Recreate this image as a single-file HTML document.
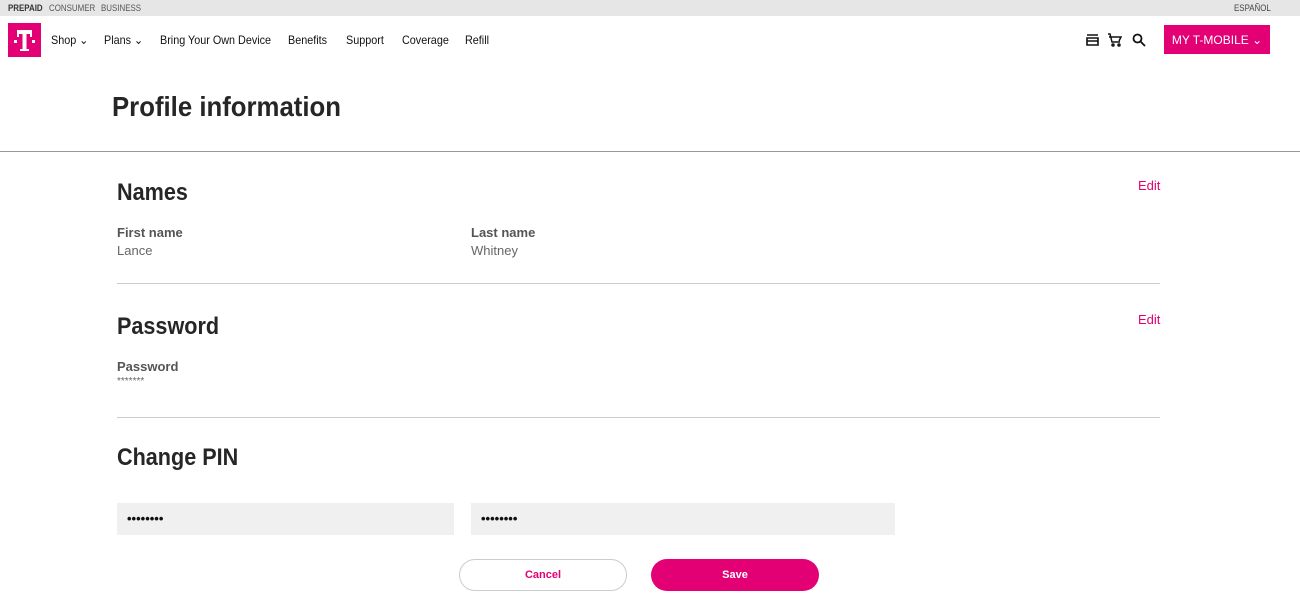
<!DOCTYPE html>
<html><head><style>
*{margin:0;padding:0;box-sizing:border-box}
body{width:1300px;height:601px;font-family:"Liberation Sans",sans-serif;background:#fff;position:relative;overflow:hidden;color:#222}
.a{position:absolute;white-space:nowrap}
.top{position:absolute;left:0;top:0;width:1300px;height:16px;background:#e6e6e6;font-size:9px;color:#333}
.top span{transform:scaleX(0.88);transform-origin:left}
.nav{font-size:12px;color:#111;top:33px;transform:scaleX(0.9);transform-origin:left}
.h{font-size:24px;color:#262626;font-weight:bold;transform:scaleX(0.9);transform-origin:left}
.lb{font-size:13px;font-weight:bold;color:#555}
.v{font-size:13px;color:#666}
.ed{font-size:13px;color:#e20074}
.hr{position:absolute;left:117px;width:1043px;height:1px;background:#ccc}
.in{position:absolute;top:503px;height:32px;background:#f0f0f0;font-size:13px;padding:8px 10px;color:#111;font-weight:bold}
.btn{position:absolute;top:559px;width:168px;height:32px;border-radius:16px;font-size:11px;font-weight:bold;text-align:center;line-height:30px}
</style></head><body>
<div class="top">
<span class="a" style="left:8px;top:3px;font-weight:bold">PREPAID</span>
<span class="a" style="left:49px;top:3px;color:#555">CONSUMER</span>
<span class="a" style="left:101px;top:3px;color:#555">BUSINESS</span>
<span class="a" style="left:1234px;top:3px;color:#444">ESPAÑOL</span>
</div>
<div class="a" style="left:8px;top:23px;width:33px;height:34px;background:#e20074"></div>
<svg class="a" style="left:8px;top:23px" width="33" height="34" viewBox="0 0 33 34"><g fill="#fff"><rect x="9" y="7" width="15" height="4"/><rect x="14.5" y="7" width="4" height="20"/><rect x="12" y="26" width="9" height="2"/><rect x="6" y="17" width="3" height="3"/><rect x="24" y="17" width="3" height="3"/><rect x="9" y="7" width="2" height="7"/><rect x="22" y="7" width="2" height="7"/></g></svg>
<span class="a nav" style="left:51px">Shop ⌄</span>
<span class="a nav" style="left:104px">Plans ⌄</span>
<span class="a nav" style="left:160px">Bring Your Own Device</span>
<span class="a nav" style="left:288px">Benefits</span>
<span class="a nav" style="left:346px">Support</span>
<span class="a nav" style="left:402px">Coverage</span>
<span class="a nav" style="left:465px">Refill</span>
<svg class="a" style="left:1086px;top:34px" width="13" height="12" viewBox="0 0 13 12" fill="none" stroke="#111" stroke-width="1.6"><path d="M1 1h11M1 4h11v7H1zM1 7h11"/></svg>
<svg class="a" style="left:1108px;top:33px" width="14" height="14" viewBox="0 0 14 14" fill="none" stroke="#111" stroke-width="1.5"><path d="M0 1h2l2 8h8M3 4h10l-2 4M1 4h12"/><circle cx="5" cy="12" r="1"/><circle cx="11" cy="12" r="1"/></svg>
<svg class="a" style="left:1132px;top:33px" width="14" height="14" viewBox="0 0 14 14" fill="none" stroke="#111" stroke-width="1.8"><circle cx="5.5" cy="5.5" r="4"/><path d="M8.5 8.5L13 13"/></svg>
<div class="a" style="left:1164px;top:25px;width:106px;height:29px;background:#e20074;color:#fff;font-size:12px;text-align:center;line-height:30px">MY T-MOBILE ⌄</div>
<div class="a" style="left:112px;top:91px;font-size:28px;color:#262626;font-weight:bold;transform:scaleX(0.92);transform-origin:left">Profile information</div>
<div class="a" style="left:0;top:151px;width:1300px;height:1px;background:#999"></div>
<div class="a h" style="left:117px;top:179px">Names</div>
<div class="a ed" style="left:1138px;top:178px">Edit</div>
<div class="a lb" style="left:117px;top:225px">First name</div>
<div class="a v" style="left:117px;top:243px">Lance</div>
<div class="a lb" style="left:471px;top:225px">Last name</div>
<div class="a v" style="left:471px;top:243px">Whitney</div>
<div class="hr" style="top:283px"></div>
<div class="a h" style="left:117px;top:313px">Password</div>
<div class="a ed" style="left:1138px;top:312px">Edit</div>
<div class="a lb" style="left:117px;top:359px">Password</div>
<div class="a v" style="left:117px;top:376px;font-size:10px">*******</div>
<div class="hr" style="top:417px"></div>
<div class="a h" style="left:117px;top:444px">Change PIN</div>
<div class="in" style="left:117px;width:337px">••••••••</div>
<div class="in" style="left:471px;width:424px">••••••••</div>
<div class="btn" style="left:459px;border:1px solid #ccc;color:#e20074">Cancel</div>
<div class="btn" style="left:651px;background:#e20074;color:#fff;line-height:32px">Save</div>
</body></html>
